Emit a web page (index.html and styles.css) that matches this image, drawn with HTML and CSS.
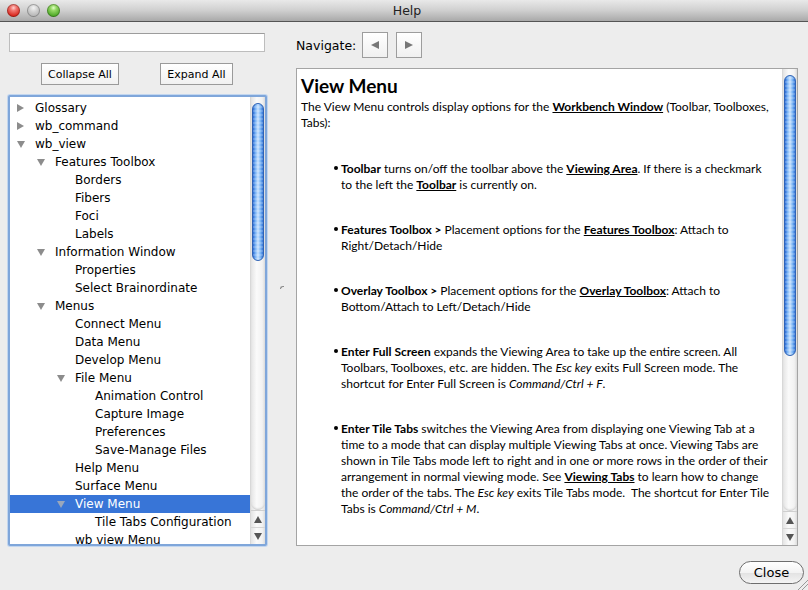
FILE: index.html
```html
<!DOCTYPE html>
<html>
<head>
<meta charset="utf-8">
<title>Help</title>
<link rel="stylesheet" href="styles.css">
</head>
<body>
<div class="window">
  <div class="titlebar">
    <div class="lights">
      <span class="light red"></span>
      <span class="light gray"></span>
      <span class="light green"></span>
    </div>
    <div class="title">Help</div>
  </div>
  <div class="main">
    <div class="left">
      <div class="search"></div>
      <div class="btnrow">
        <div class="btn btn-collapse">Collapse All</div>
        <div class="btn btn-expand">Expand All</div>
      </div>
      <div class="tree">
        <div class="rows">
          <div class="row l0"><span class="tw closed"></span>Glossary</div>
          <div class="row l0"><span class="tw closed"></span>wb_command</div>
          <div class="row l0"><span class="tw open"></span>wb_view</div>
          <div class="row l1"><span class="tw open"></span>Features Toolbox</div>
          <div class="row l2"><span class="tw"></span>Borders</div>
          <div class="row l2"><span class="tw"></span>Fibers</div>
          <div class="row l2"><span class="tw"></span>Foci</div>
          <div class="row l2"><span class="tw"></span>Labels</div>
          <div class="row l1"><span class="tw open"></span>Information Window</div>
          <div class="row l2"><span class="tw"></span>Properties</div>
          <div class="row l2"><span class="tw"></span>Select Brainordinate</div>
          <div class="row l1"><span class="tw open"></span>Menus</div>
          <div class="row l2"><span class="tw"></span>Connect Menu</div>
          <div class="row l2"><span class="tw"></span>Data Menu</div>
          <div class="row l2"><span class="tw"></span>Develop Menu</div>
          <div class="row l2"><span class="tw open"></span>File Menu</div>
          <div class="row l3"><span class="tw"></span>Animation Control</div>
          <div class="row l3"><span class="tw"></span>Capture Image</div>
          <div class="row l3"><span class="tw"></span>Preferences</div>
          <div class="row l3"><span class="tw"></span>Save-Manage Files</div>
          <div class="row l2"><span class="tw"></span>Help Menu</div>
          <div class="row l2"><span class="tw"></span>Surface Menu</div>
          <div class="row l2 sel"><span class="tw open"></span>View Menu</div>
          <div class="row l3"><span class="tw"></span>Tile Tabs Configuration</div>
          <div class="row l2"><span class="tw"></span>wb view Menu</div>
        </div>
        <div class="vscroll">
          <div class="track">
            <div class="thumb tree-thumb"></div>
          </div>
          <div class="arrows">
            <span class="arr up"></span>
            <span class="arr down"></span>
          </div>
        </div>
      </div>
    </div>
    <div class="splitter"><span class="grip"></span></div>
    <div class="right">
      <div class="navrow">
        <span class="navlabel">Navigate:</span>
        <div class="navbtn"><span class="tri-l"></span></div>
        <div class="navbtn"><span class="tri-r"></span></div>
      </div>
      <div class="docbox">
        <div class="doc">
          <h1>View Menu</h1>
          <p>The View Menu controls display options for the <a>Workbench Window</a> (Toolbar, Toolboxes,<br>Tabs):</p>
          <ul>
            <li><b>Toolbar</b> turns on/off the toolbar above the <a>Viewing Area</a>. If there is a checkmark<br>to the left the <a>Toolbar</a> is currently on.</li>
            <li><b>Features Toolbox &gt;</b> Placement options for the <a>Features Toolbox</a>: Attach to<br>Right/Detach/Hide</li>
            <li><b>Overlay Toolbox &gt;</b> Placement options for the <a>Overlay Toolbox</a>: Attach to<br>Bottom/Attach to Left/Detach/Hide</li>
            <li><b>Enter Full Screen</b> expands the Viewing Area to take up the entire screen. All<br>Toolbars, Toolboxes, etc. are hidden. The <i>Esc key</i> exits Full Screen mode. The<br>shortcut for Enter Full Screen is <i>Command/Ctrl + F</i>.</li>
            <li><b>Enter Tile Tabs</b> switches the Viewing Area from displaying one Viewing Tab at a<br>time to a mode that can display multiple Viewing Tabs at once. Viewing Tabs are<br>shown in Tile Tabs mode left to right and in one or more rows in the order of their<br>arrangement in normal viewing mode. See <a>Viewing Tabs</a> to learn how to change<br>the order of the tabs. The <i>Esc key</i> exits Tile Tabs mode.&nbsp; The shortcut for Enter Tile<br>Tabs is <i>Command/Ctrl + M</i>.</li>
          </ul>
        </div>
        <div class="vscroll">
          <div class="track">
            <div class="thumb doc-thumb"></div>
          </div>
          <div class="arrows">
            <span class="arr up"></span>
            <span class="arr down"></span>
          </div>
        </div>
      </div>
    </div>
  </div>
  <div class="footer">
    <div class="close">Close</div>
    <div class="resize"></div>
  </div>
</div>
</body>
</html>
```
FILE: styles.css
```css
* { box-sizing: border-box; }
html, body { margin: 0; padding: 0; }
body {
  width: 808px;
  height: 590px;
  overflow: hidden;
  background: #ededed;
  font-family: "DejaVu Sans", "Lucida Grande", sans-serif;
  font-size: 12px;
  color: #000;
}
.window { width: 808px; height: 590px; display: flex; flex-direction: column; }

.titlebar {
  height: 22px;
  flex: none;
  background: linear-gradient(#e9e9e9, #cfcfcf 50%, #a9a9a9);
  border-bottom: 1px solid #555;
  display: flex;
  align-items: center;
}
.lights { display: flex; gap: 7px; padding-left: 7px; }
.light {
  width: 13px; height: 13px; border-radius: 50%;
  box-shadow: inset 0 0 0 1px rgba(0,0,0,0.25);
}
.light.red { background: radial-gradient(circle at 50% 30%, #ffd2d0 0, #f27a74 25%, #d8281f 70%, #a3140c 100%); }
.light.gray { background: radial-gradient(circle at 50% 30%, #f4f4f4 0, #d2d2d2 35%, #b4b4b4 75%, #969696 100%); }
.light.green { background: radial-gradient(circle at 50% 30%, #e3ffc9 0, #96d966 25%, #4fa928 70%, #2f7a12 100%); }
.title {
  flex: 1;
  text-align: center;
  margin-left: -54px;
  font-size: 12.5px;
  color: #222;
}

.main { flex: 1; display: flex; padding: 10px 0 0 8px; min-height: 0; }
.left { width: 259px; flex: none; display: flex; flex-direction: column; }
.search {
  margin: 1px 2px 0 1px;
  height: 21px;
  background: #fff;
  border: 1px solid #bdbdbd;
  border-top-color: #9c9c9c;
}
.btnrow { display: flex; justify-content: space-between; padding: 11px 34px 0 33px; }
.btn {
  height: 22px;
  border: 1px solid #9a9a9a;
  background: linear-gradient(#ffffff, #f1f1f1);
  display: flex; align-items: center; justify-content: center;
  font-size: 11px;
}
.btn-collapse { width: 78px; }
.btn-expand { width: 73px; }
.tree {
  margin-top: 10px;
  height: 451px;
  border: 2px solid #7fa6da;
  box-shadow: 0 0 0 1px #c2d6ef;
  border-radius: 2px;
  background: #fff;
  display: flex;
}
.rows { flex: 1; overflow: hidden; padding-top: 2px; }
.row {
  height: 18px;
  display: flex;
  align-items: center;
  white-space: nowrap;
  padding-left: 7px;
}
.row.l1 { padding-left: 27px; }
.row.l2 { padding-left: 47px; }
.row.l3 { padding-left: 67px; }
.row.sel { background: #3875d7; color: #fff; }
.tw { width: 18px; flex: none; height: 10px; position: relative; }
.tw.closed::before {
  content: ""; position: absolute; left: 0; top: 1px;
  border-left: 7px solid #8c8c8c;
  border-top: 4.5px solid transparent;
  border-bottom: 4.5px solid transparent;
}
.tw.open::before {
  content: ""; position: absolute; left: 0; top: 2px;
  border-top: 7px solid #8c8c8c;
  border-left: 4.5px solid transparent;
  border-right: 4.5px solid transparent;
}
.row.sel .tw.open::before { border-top-color: #9aa7bb; }

.vscroll {
  width: 15px; flex: none;
  display: flex; flex-direction: column;
  background: linear-gradient(90deg, #e4e4e4, #fafafa 40%, #f2f2f2 80%, #dcdcdc);
  border-left: 1px solid #d8d8d8;
}
.track { flex: 1; padding: 6px 1px 0 1px; border-radius: 0 0 8px 8px; box-shadow: inset 0 -2px 2px -1px #c8c8c8; }
.thumb {
  border-radius: 7px;
  border: 1px solid #2f63b5;
  background:
    repeating-linear-gradient(0deg, rgba(255,255,255,0.18) 0 2px, rgba(255,255,255,0) 2px 4px),
    linear-gradient(90deg, #2a6ad4, #79b3f5 25%, #c8e2ff 50%, #7ab4f4 75%, #3374d6);
}
.tree-thumb { height: 158px; }
.doc-thumb { height: 281px; }
.arrows { height: 34px; flex: none; display: flex; flex-direction: column; border-top: 1px solid #cfcfcf; }
.arr { flex: 1; position: relative; }
.arr.up { border-bottom: 1px solid #d6d6d6; }
.arr::before { content: ""; position: absolute; left: 3px; top: 5px; border-left: 4px solid transparent; border-right: 4px solid transparent; }
.arr.up::before { border-bottom: 7px solid #555; }
.arr.down::before { border-top: 7px solid #555; }

.splitter { width: 29px; flex: none; display: flex; align-items: center; justify-content: center; }
.grip { width: 4px; height: 3px; border-top: 1px solid #8a8a8a; border-left: 1px solid #8a8a8a; border-radius: 3px 0 0 0; margin-top: -3px; }

.right { flex: none; width: 502px; display: flex; flex-direction: column; }
.navrow { display: flex; align-items: center; height: 26px; }
.navlabel { font-size: 12.5px; margin-right: 6px; }
.navbtn {
  width: 26px; height: 26px; margin-right: 8px;
  border: 1px solid #9d9d9d;
  background: linear-gradient(#ffffff, #f0f0f0);
  display: flex; align-items: center; justify-content: center;
}
.tri-l { width: 0; height: 0; border-right: 8px solid #777; border-top: 4px solid transparent; border-bottom: 4px solid transparent; }
.tri-r { width: 0; height: 0; border-left: 8px solid #777; border-top: 4px solid transparent; border-bottom: 4px solid transparent; }

.docbox {
  margin-top: 10px;
  height: 478px;
  border: 1px solid #a4a4a4;
  background: #fff;
  display: flex;
}
.doc {
  flex: 1; overflow: hidden;
  padding: 4px 0 0 4px;
  font-family: "Lato", "Open Sans", sans-serif;
  font-size: 12px;
  letter-spacing: 0;
  line-height: 16px;
  white-space: nowrap;
}
.doc h1 { margin: 0; font-size: 19px; line-height: 26px; font-weight: bold; }
.doc p { margin: 0; }
.doc a { font-weight: bold; text-decoration: underline; color: #000; }
.doc ul { list-style: none; margin: 30px 0 0 0; padding-left: 40px; }
.doc li + li { margin-top: 29px; }
.doc li::before {
  content: ""; display: inline-block; width: 4px; height: 4px; border-radius: 50%;
  background: #000; margin-left: -7px; margin-right: 3px; vertical-align: 3px;
}

.footer { height: 44px; flex: none; display: flex; justify-content: flex-end; align-items: flex-start; padding-top: 15px; position: relative; }
.close {
  width: 65px; height: 23px; margin-right: 4px;
  border: 1px solid #6e6e6e;
  border-radius: 12px;
  background: linear-gradient(#ffffff, #f3f3f3 50%, #e2e2e2 51%, #f4f4f4);
  display: flex; align-items: center; justify-content: center;
  font-size: 13px;
}
.resize {
  position: absolute; right: 0; bottom: 0; width: 11px; height: 11px;
  background: linear-gradient(135deg, transparent 50%, #999 50%, #999 57%, transparent 57%, transparent 70%, #999 70%, #999 77%, transparent 77%);
}
```
